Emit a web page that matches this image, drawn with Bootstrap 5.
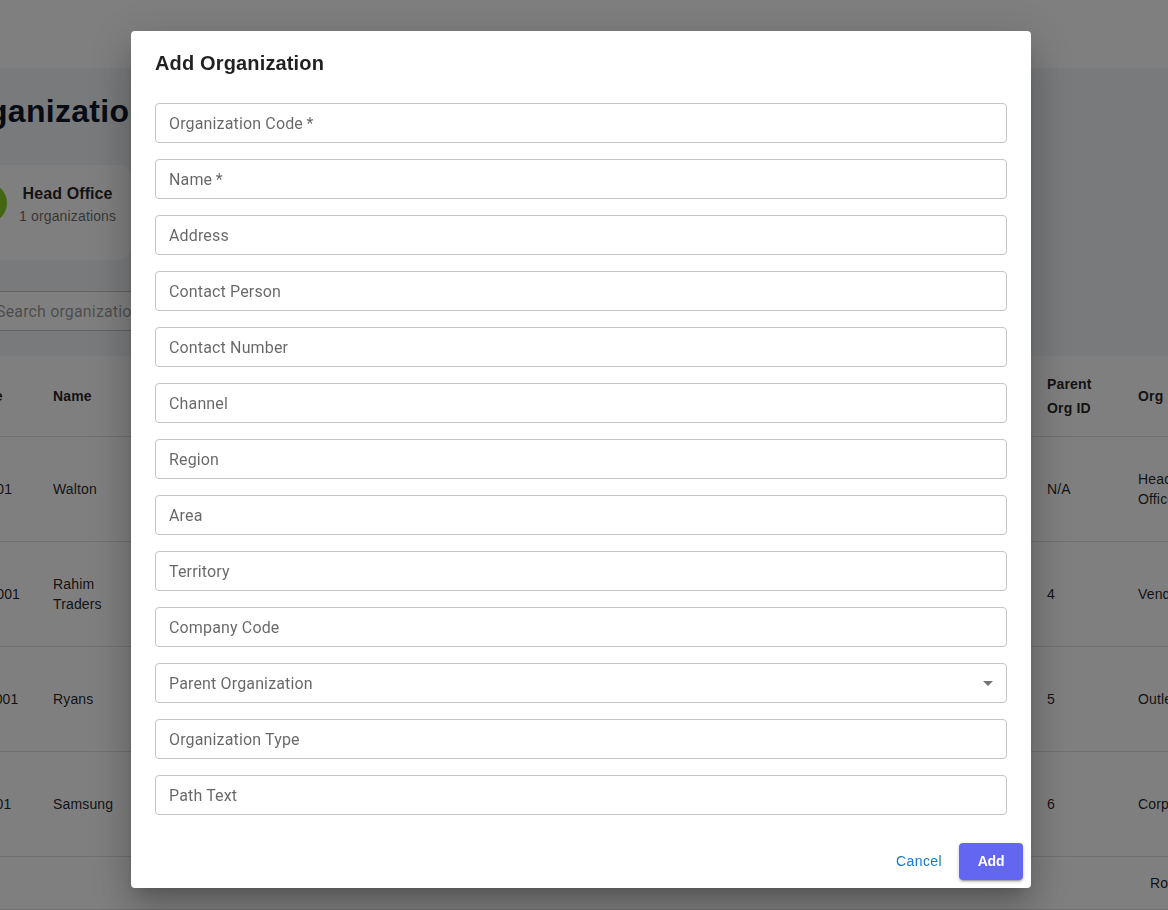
<!DOCTYPE html>
<html lang="en">
<head>
<meta charset="utf-8">
<meta name="viewport" content="width=device-width, initial-scale=1">
<title>Organizations</title>
<link href="https://cdn.jsdelivr.net/npm/bootstrap@5.3.0/dist/css/bootstrap.min.css" rel="stylesheet">
<style>
body{font-family:"Liberation Sans",Arial,sans-serif;font-size:14px;line-height:20px;letter-spacing:.15px;color:rgba(0,0,0,.87);height:910px;overflow:hidden;background:#fff}
main{overflow:hidden}
.topbar{height:68px;background:#fff}
.page{height:288px;background:#f1f5f9;overflow:hidden}
.page-title{font-size:32px;line-height:42px;font-weight:700;letter-spacing:.3px;color:#0f172a;margin:22px 0 0 -50px;white-space:nowrap}
.stat{height:95px;width:231px;margin:33px 0 0 -100px;border-radius:12px;background:#fff;padding-left:67px}
.dot{width:40px;height:40px;background:#86cf22;margin-top:18px}
.stat-text{padding:17px 0 0 12px}
.stat-name{font-size:16px;line-height:24px;font-weight:700;letter-spacing:.1px;color:rgba(0,0,0,.87)}
.muted{color:rgba(0,0,0,.6);line-height:20px}
.search{height:40px;width:400px;margin:31px 0 0 -45px;background:#fff;border:1px solid #c4c4c4;border-radius:4px;font:16px/40px Roboto,sans-serif;letter-spacing:.15px;padding-left:40px;color:rgba(0,0,0,.42)}
.orgs{table-layout:fixed;width:1260px;margin-left:-49px;border-collapse:separate;border-spacing:0}
.orgs th,.orgs td{padding:16px;border-bottom:1px solid #e0e0e0;vertical-align:middle}
.orgs th{height:81px;line-height:24px;font-weight:700}
.orgs .org-type{word-spacing:2px}
.orgs td{height:105px}
.pager{height:53px;border-bottom:1px solid #e0e0e0;padding:0 0 0 1150px;white-space:nowrap}
.shade{background:rgba(0,0,0,.5);padding:31px 6px 0 0}
.dialog{width:900px;height:857px;border-radius:4px;background:#fff;box-shadow:0 11px 15px -7px rgba(0,0,0,.2),0 24px 38px 3px rgba(0,0,0,.14),0 9px 46px 8px rgba(0,0,0,.12)}
.dialog h2{font-size:20px;line-height:32px;font-weight:700;letter-spacing:.15px;padding:16px 24px;margin:0 0 8px}
.fields{padding:0 24px;gap:16px}
.field{height:40px;border:1px solid #c4c4c4;border-radius:4px;padding:0 6px 0 13px;font:16px/40px Roboto,sans-serif;letter-spacing:.15px;color:rgba(0,0,0,.6)}
.actions{padding:28px 8px 8px;gap:8px}
.actions .btn{width:64px;height:37px;padding:0 0 2px;font-size:14px;line-height:24px;letter-spacing:.4px;border:0;border-radius:4px;color:#1976d2}
.actions .btn-add{background:#6366f1;color:#fff;box-shadow:0 3px 1px -2px rgba(0,0,0,.2),0 2px 2px rgba(0,0,0,.14),0 1px 5px rgba(0,0,0,.12);font-weight:600;letter-spacing:-.2px}
</style>
</head>
<body>
<header class="topbar"></header>
<main>
<section class="page">
  <h1 class="page-title">Organizations</h1>
  <div class="stat d-flex">
    <div class="dot rounded-circle flex-shrink-0"></div>
    <div class="stat-text text-center"><div class="stat-name">Head Office</div><div class="muted">1 organizations</div></div>
  </div>
  <div class="search">Search organizations...</div>
</section>
<table class="orgs">
  <colgroup><col style="width:86px"><col style="width:107px"><col><col style="width:91px"><col style="width:89px"></colgroup>
  <thead><tr><th>Code</th><th>Name</th><th></th><th>Parent Org ID</th><th class="org-type text-nowrap">Org Type</th></tr></thead>
  <tbody>
    <tr><td>HO001</td><td>Walton</td><td></td><td>N/A</td><td>Head Office</td></tr>
    <tr><td>VEN001</td><td>Rahim Traders</td><td></td><td>4</td><td>Vendor</td></tr>
    <tr><td>OTL001</td><td>Ryans</td><td></td><td>5</td><td>Outlet</td></tr>
    <tr><td>CR001</td><td>Samsung</td><td></td><td>6</td><td>Corporate</td></tr>
  </tbody>
</table>
<div class="pager d-flex align-items-center">Rows per page:</div>
</main>
<div class="shade position-fixed top-0 start-0 w-100 h-100 d-flex justify-content-center align-items-start">
  <div class="dialog" role="dialog">
    <h2>Add Organization</h2>
    <div class="fields d-flex flex-column">
      <div class="field">Organization Code&#8201;*</div>
      <div class="field">Name&#8201;*</div>
      <div class="field">Address</div>
      <div class="field">Contact Person</div>
      <div class="field">Contact Number</div>
      <div class="field">Channel</div>
      <div class="field">Region</div>
      <div class="field">Area</div>
      <div class="field">Territory</div>
      <div class="field">Company Code</div>
      <div class="field d-flex justify-content-between">Parent Organization
        <svg class="align-self-center" width="24" height="24" viewBox="0 0 24 24" fill="#757575"><path d="M7 10l5 5 5-5z"/></svg></div>
      <div class="field">Organization Type</div>
      <div class="field">Path Text</div>
    </div>
    <div class="actions d-flex justify-content-end">
      <button class="btn">Cancel</button>
      <button class="btn btn-add">Add</button>
    </div>
  </div>
</div>
<script src="https://cdn.jsdelivr.net/npm/bootstrap@5.3.0/dist/js/bootstrap.bundle.min.js"></script>
</body>
</html>
